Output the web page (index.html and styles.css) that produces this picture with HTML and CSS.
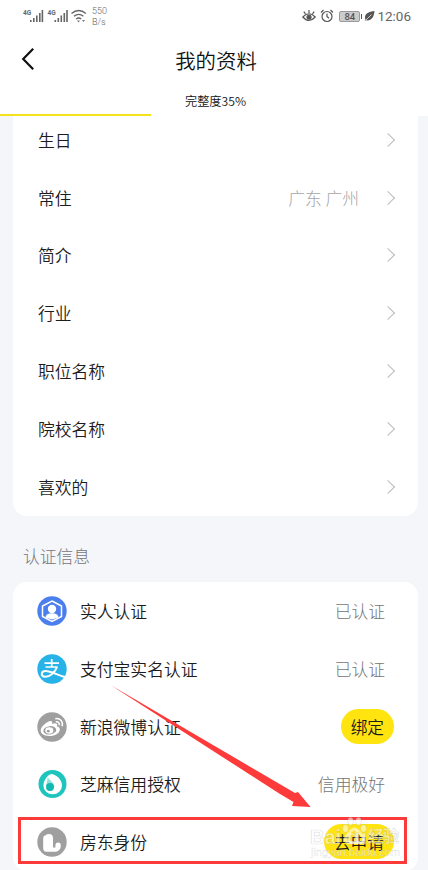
FILE: index.html
```html
<!DOCTYPE html>
<html lang="zh-CN">

<head>
    <meta charset="UTF-8">
    <meta name="viewport" content="width=device-width, initial-scale=1.0">
    <title>我的资料</title>
    <link rel="stylesheet" href="styles.css">
</head>

<body>
    <header class="header">
        <div class="status">
            <svg class="signal" width="66" height="16" viewBox="0 0 66 16">
                <g fill="#666">
                    <text x="0" y="7" class="net">4G</text>
                    <path d="M7 12h1.6v2H7zM10 10h1.6v4H10zM13 7.500h1.600v6.500H13zM16 5h1.600v9H16zM18.600 2h1.600v12h-1.600z" />
                    <text x="24.500" y="7" class="net">4G</text>
                    <path d="M31.500 12h1.600v2h-1.600zM34.500 10h1.600v4h-1.600zM37.500 7.500h1.600v6.500h-1.600zM40.500 5h1.600v9h-1.600zM43.200 2h1.600v12h-1.600z" />
                </g>
                <g fill="none" stroke="#666" stroke-width="1.400">
                    <path d="M48.500 5.500q7.200-6 14.400 0M51 8.300q4.700-3.800 9.400 0M53.200 11q2.500-2 5 0" />
                </g>
                <path d="M54 12.500h3l-1.500 2zM59 12h3l-1.500 2z" fill="#777" />
            </svg>
            <div class="speed">550<br>B/s</div>
            <div class="status-right">
                <svg width="14" height="14" viewBox="0 0 14 14" fill="none" stroke="#555" stroke-width="1.200">
                    <path d="M.8 8Q7 1.500 13.200 8 7 15 .8 8zM7 4V1M3.500 4.800L1.800 2.600M10.500 4.800l1.700-2.200" />
                    <circle cx="7" cy="8.200" r="2" fill="#555" />
                </svg>
                <svg width="14" height="14" viewBox="0 0 14 14" fill="none" stroke="#555" stroke-width="1.200">
                    <circle cx="7" cy="7.500" r="5" />
                    <path d="M7 4.500v3l2 1.800M1 3.500L3.500 1M13 3.500L10.500 1" />
                </svg>
                <span class="battery">84</span>
                <svg class="leaf" width="11" height="12" viewBox="0 0 11 12">
                    <path d="M10.500 1C4 1.500-.5 4.500 1.500 9.500L.5 11l1.800-.7C7.500 11 10 7 10.500 1z" fill="#555" />
                    <path d="M1.500 10.500L7.500 4.500" stroke="#fff" stroke-width=".7" />
                </svg>
                <span class="clock">12:06</span>
            </div>
        </div>
        <div class="nav">
            <svg class="back" width="14" height="24" viewBox="0 0 14 24">
                <path d="M12.200 1.800L2.200 12l10 10.200" fill="none" stroke="#111" stroke-width="2.200" />
            </svg>
            <h1>我的资料</h1>
        </div>
        <div class="percent">完整度35%</div>
        <div class="progress">
            <div class="progress-bar" style="width: 35.200%"></div>
        </div>
    </header>

    <main>
        <ul class="card info">
            <li><span>生日</span><i class="arrow"></i></li>
            <li><span>常住</span><em>广东 广州</em><i class="arrow"></i></li>
            <li><span>简介</span><i class="arrow"></i></li>
            <li><span>行业</span><i class="arrow"></i></li>
            <li><span>职位名称</span><i class="arrow"></i></li>
            <li><span>院校名称</span><i class="arrow"></i></li>
            <li><span>喜欢的</span><i class="arrow"></i></li>
        </ul>

        <h2>认证信息</h2>

        <ul class="card auth">
            <li>
                <svg class="icon" viewBox="0 0 30 30">
                    <circle cx="15" cy="15" r="14.700" fill="#4b7fee" />
                    <path d="M15 5l9.500 5v10.500L15 25.300 5.500 20.500V10z" fill="none" stroke="#fff" stroke-width="1.500" />
                    <circle cx="15" cy="13" r="4.200" fill="#fff" />
                    <path d="M8.500 21.500c.3-3 2.500-4.300 6.500-4.300s6.200 1.300 6.500 4.300L15 23.500z" fill="#fff" />
                </svg>
                <span>实人认证</span><em>已认证</em>
            </li>
            <li>
                <svg class="icon" viewBox="0 0 30 30">
                    <circle cx="15" cy="15" r="14.700" fill="#27b3e8" />
                    <g fill="none" stroke="#fff">
                        <path d="M7.500 9.200h14.500M14.700 5v8M8.500 13h12" stroke-width="1.700" />
                        <path d="M20 13c-2 5.500-7 10-12 9.800-4.500-.3-4.300-5.600.5-5.700 5-.1 10.500 3.400 20 6.200" stroke-width="2" />
                    </g>
                </svg>
                <span>支付宝实名认证</span><em>已认证</em>
            </li>
            <li>
                <svg class="icon" viewBox="0 0 30 30">
                    <circle cx="15" cy="15" r="14.700" fill="#9f9f9f" />
                    <path d="M12.500 9.200c2-.8 3.300.3 2.500 2.800 3-1.300 6-.8 5 2.200 2.500.8 3.500 2.500 2.500 4.800-1.500 3.500-6 5.200-10.500 5-5-.2-8.500-2.500-8.300-5.700.2-3.500 5-8 8.800-9.100z" fill="#fff" />
                    <ellipse cx="12.800" cy="18.300" rx="6.500" ry="4.200" fill="#9f9f9f" transform="rotate(-8 12.800 18.300)" />
                    <ellipse cx="12.300" cy="18.500" rx="4" ry="3.200" fill="#fff" />
                    <circle cx="11.300" cy="19.200" r="1.400" fill="#9f9f9f" />
                    <path d="M18.300 6.700c4.500-1 8.200 2.700 6.800 7.500M18.800 9.800c2.300-.4 4 1.300 3.300 3.500" fill="none" stroke="#fff" stroke-width="1.500" />
                </svg>
                <span>新浪微博认证</span><button class="pill">绑定</button>
            </li>
            <li>
                <svg class="icon" viewBox="0 0 30 30">
                    <circle cx="15.500" cy="15" r="14" fill="#1dc5bc" />
                    <path d="M14.500 5C18 5 25 10 25 16.500a9.300 8.800 0 0 1-18.600 0C6.400 12 10 6 14.500 5z" fill="#fff" />
                    <path d="M10.500 8.500c2.500 2.500 6.800 5.500 6.800 9.300a4.200 4.200 0 0 1-8.400 0c0-3 1.600-5 1.600-9.300z" fill="#8ee0dc" />
                    <circle cx="13" cy="18" r="3.900" fill="#13b8b0" />
                </svg>
                <span>芝麻信用授权</span><em>信用极好</em>
            </li>
            <li>
                <svg class="icon" viewBox="0 0 30 30">
                    <circle cx="15" cy="15" r="14.700" fill="#9f9f9f" />
                    <path d="M6.200 21V11q0-2.500 2.500-2.800 1-1.200 3.300-1.200 4 0 4 4v9.500h2.400v-2q0-3 2.700-3t2.700 3c0 4-2.400 6.300-6.500 6.300h-8q-3.100-.3-3.100-3.800z" fill="#fff" />
                </svg>
                <span>房东身份</span><button class="pill">去申请</button>
            </li>
        </ul>
    </main>

    <div class="mark-box"></div>
    <svg class="overlay" width="428" height="870" viewBox="0 0 428 870">
        <path d="M110.500 685L295 793l3-1L310.500 807l-18.500-1 1.500-4L280 794z" fill="#fd3b3b" />
        <g class="watermark">
            <text x="310" y="843.500" class="wm-big" textLength="31">Bai</text>
            <text x="347" y="843.500" class="wm-big" textLength="20">du</text>
            <text x="368" y="842" class="wm-cn" textLength="31">经验</text>
            <text x="311" y="856" class="wm-url" textLength="89">jingyan.baidu.com</text>
            <g class="paw">
                <ellipse cx="345.500" cy="828.500" rx="3" ry="4" />
                <ellipse cx="350.500" cy="821.500" rx="2.800" ry="4" />
                <ellipse cx="358.500" cy="821.500" rx="2.800" ry="4" />
                <ellipse cx="363.500" cy="828.500" rx="3" ry="3.700" />
                <path class="paw-pad" d="M354.500 829c3 0 5 4 8 7.500 2 2.500 1.500 6-2.500 6h-11c-4 0-4.500-3.500-2.500-6 3-3.500 5-7.500 8-7.500z" />
            </g>
        </g>
    </svg>
</body>

</html>
```

FILE: styles.css
```css
* {
    box-sizing: border-box;
    margin: 0;
    padding: 0;
}

body {
    width: 428px;
    height: 870px;
    overflow: hidden;
    background-color: #f4f6f9;
    font-family: "Noto Sans CJK SC", sans-serif;
    font-weight: 350;
    color: #1c1c1c;
}

.header {
    position: relative;
    z-index: 1;
    height: 116px;
    background-color: #fff;
    display: flex;
    flex-direction: column;
}

.status {
    height: 32px;
    padding: 0 17px 0 23px;
    display: flex;
    align-items: center;
    font-family: Roboto, sans-serif;
    color: #666;
}

.net {
    font: bold 6.5px Roboto, sans-serif;
}

.speed {
    margin: 1px 0 0 3px;
    font-size: 9px;
    line-height: 10.500px;
}

.status-right {
    margin-left: auto;
    display: flex;
    align-items: center;
}

.status-right svg + svg {
    margin-left: 4px;
}

.battery {
    position: relative;
    width: 21px;
    height: 11px;
    margin-left: 5px;
    border: 1px solid #999;
    border-radius: 2px;
    background-color: #ccc;
    font-size: 9.500px;
    font-weight: 500;
    line-height: 10px;
    text-align: center;
    color: #555;
}

.battery::after {
    content: "";
    position: absolute;
    right: -3px;
    top: 2px;
    width: 1px;
    height: 5px;
    background-color: #555;
}

.leaf {
    margin-left: 4px;
}

.clock {
    margin-left: 2px;
    font-size: 13.500px;
    font-weight: 400;
    color: #666;
}

.nav {
    height: 56px;
    display: grid;
    grid-template-columns: 60px 1fr 56px;
    align-items: center;
}

.back {
    margin: -2px 0 0 21px;
}

h1 {
    font-size: 20.400px;
    font-weight: 350;
    line-height: 30px;
    text-align: center;
    color: #111;
}

.percent {
    height: 26px;
    padding-left: 3px;
    font-size: 12.200px;
    font-weight: 350;
    line-height: 27px;
    text-align: center;
    color: #111;
}

.progress-bar {
    height: 2px;
    background-color: #f5e31a;
}

main {
    padding: 0 10px 0 13px;
}

.card {
    list-style: none;
    border-radius: 14px;
    background-color: #fff;
    font-size: 16.800px;
}

.card li {
    height: 57.800px;
    display: flex;
    align-items: center;
}

.card span {
    margin-right: auto;
}

.card em {
    font-style: normal;
    font-weight: 300;
    color: #757575;
}

/* the first row is partly scrolled under the header */
.info {
    margin-top: -5px;
    padding: 0 23px 0 25px;
    border-radius: 0 0 14px 14px;
}

.card.info em {
    margin-right: 24px;
    color: #a5a5a5;
}

.arrow {
    width: 10px;
    height: 10px;
    margin-right: 2px;
    border-top: 1.500px solid #bbb;
    border-right: 1.500px solid #bbb;
    transform: rotate(45deg);
}

h2 {
    height: 66px;
    padding: 9px 0 0 10px;
    font-size: 16.800px;
    font-weight: 300;
    line-height: 62px;
    color: #757579;
}

.auth {
    padding: 1px 33px 0 24px;
}

.auth li {
    height: 57.600px;
}

.icon {
    width: 30px;
    height: 30px;
    margin-right: 13px;
}

.pill {
    height: 35px;
    margin-right: -9px;
    padding: 0 10px;
    border: none;
    border-radius: 18px;
    background-color: #ffe40f;
    font-family: inherit;
    font-size: 16.700px;
    font-weight: 350;
    color: #1c1c1c;
}

/* annotations lying over the screen */
.mark-box {
    position: absolute;
    z-index: 2;
    left: 18px;
    top: 817px;
    width: 389px;
    height: 47px;
    border: 3px solid #fb3a3a;
}

.overlay {
    position: absolute;
    z-index: 3;
    left: 0;
    top: 0;
}

.watermark {
    fill: rgba(255, 255, 255, .55);
    stroke: rgba(150, 150, 150, .3);
    stroke-width: .7px;
}

.paw-pad {
    fill: none;
    stroke: rgba(255, 255, 255, .55);
    stroke-width: 3px;
}

.wm-big {
    font: bold 20px "Liberation Sans", sans-serif;
}

.wm-cn {
    font: bold 16px "Noto Sans CJK SC", sans-serif;
}

.wm-url {
    font: 11px "Liberation Sans", sans-serif;
    stroke-width: .4px;
}
```
